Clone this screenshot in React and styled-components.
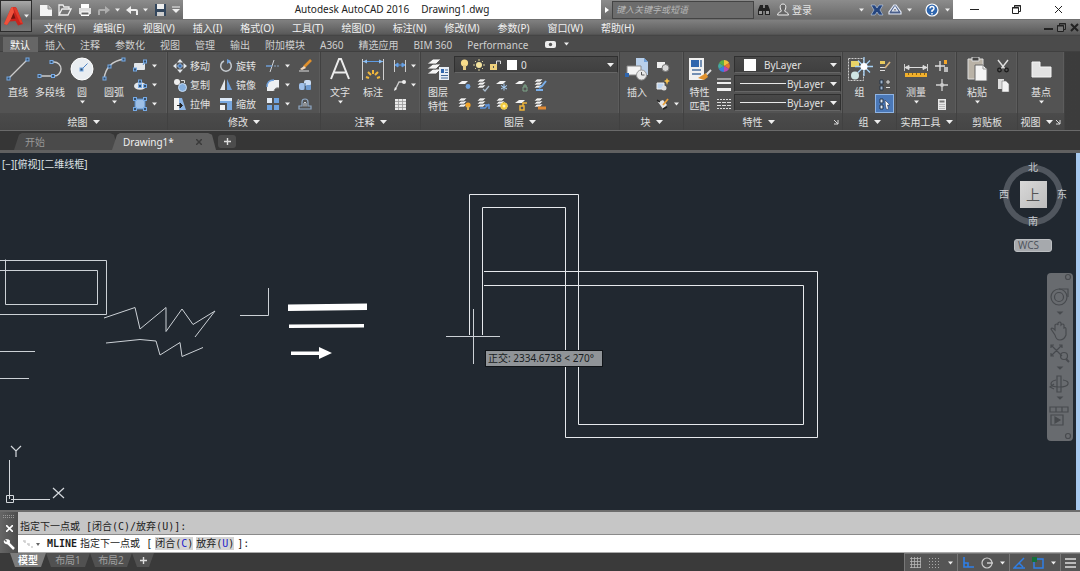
import React from 'react';
import styled, { createGlobalStyle, css } from 'styled-components';

const sans = '"Noto Sans", "Noto Sans CJK SC", sans-serif';
const mono = '"DejaVu Sans Mono", "Noto Sans CJK SC", monospace';

const Global = createGlobalStyle`
  * { box-sizing: border-box; }
  body { margin: 0; background: #3a3a3a; font: 10px/14px ${sans}; color: #e2e2e2; }
  button, input, select { font: inherit; color: inherit; border: 0; padding: 0; margin: 0; background: none; border-radius: 0; outline: 0; }
  svg { display: block; flex: none; }
  a { color: inherit; text-decoration: none; }
`;

/* ---------- frame ---------- */
const Window = styled.div`
  min-height: 100vh;
  display: flex;
  flex-direction: column;
  overflow: hidden;
`;
const Header = styled.header`
  display: flex;
  height: 36px;
  background: linear-gradient(#606060 0, #606060 19px, #808080 20px, #5a5a5a 34px, #3e3e3e 36px);
`;
const AppButton = styled.button`
  width: 32px;
  height: 32px;
  flex: none;
  display: flex;
  align-items: center;
  gap: 1px;
  padding-left: 2px;
  background: linear-gradient(#a8a8a8, #666 60%, #777);
  border: 1px solid #2c2c2c;
`;
const HeaderRows = styled.div`
  flex: 1;
  min-width: 0;
`;
const TitleBar = styled.div`
  display: flex;
  height: 19px;
  background: #fff;
`;
const grayStrip = css`
  background: linear-gradient(#8c8c8c, #686868);
  display: flex;
  align-items: center;
`;
const QuickAccess = styled.div`
  ${grayStrip}
  width: 151px;
  flex: none;
  padding-left: 5px;
`;
const IconButton = styled.button`
  width: ${(p) => p.$w || 18}px;
  height: ${(p) => p.$h || 18}px;
  flex: none;
  display: flex;
  align-items: center;
  justify-content: center;
  opacity: ${(p) => (p.$dim ? 0.45 : 1)};
`;
const Title = styled.h1`
  flex: 1;
  margin: 0;
  display: flex;
  gap: 12px;
  justify-content: center;
  font: 400 10px/19px ${sans};
  color: #222;
  white-space: nowrap;
`;
const InfoCenter = styled.div`
  ${grayStrip}
  width: 352px;
  flex: none;
`;
const SearchBox = styled.input`
  width: 142px;
  height: 18px;
  padding: 0 3px;
  background: #6c6c6c;
  border: 1px solid #444;
  font: italic 9px/16px ${sans};
  &::placeholder { color: #b8b8b8; opacity: 1; }
`;
const SignIn = styled.button`
  width: 62px;
  text-align: left;
`;
const WindowButtons = styled.div`
  width: 127px;
  flex: none;
  display: flex;
  justify-content: space-around;
  align-items: center;
`;
const MenuBar = styled.nav`
  display: flex;
  align-items: center;
  height: 17px;
  padding: 0 0 0 12px;
`;
const MenuItem = styled.button`
  margin-right: 18px;
  color: #f0f0f0;
  white-space: nowrap;
`;
const Spacer = styled.div`
  flex: 1;
`;

/* ---------- ribbon ---------- */
const TabRow = styled.div`
  display: flex;
  height: 16px;
  padding: 1px 0 0 3px;
  background: #4b4b4b;
  border-bottom: 1px solid #404040;
`;
const RibbonTab = styled.button`
  height: 15px;
  padding: 0 8px 0 7px;
  white-space: nowrap;
  color: ${(p) => (p.$active ? '#fff' : '#cfcfcf')};
  background: ${(p) => (p.$active ? '#666' : 'transparent')};
`;
const Ribbon = styled.div`
  display: flex;
  height: 79px;
  background: linear-gradient(90deg, #4a4a4a, #3c3c3c);
  border-bottom: 1px solid #6a6a6a;
`;
const Panel = styled.section`
  width: ${(p) => p.$w}px;
  flex: none;
  display: flex;
  flex-direction: column;
  background: #535353;
  border-right: 1px solid #414141;
  box-shadow: inset -1px 0 #5c5c5c;
`;
const PanelBody = styled.div`
  flex: 1;
  display: flex;
  padding: 4px 0 0 ${(p) => p.$pad || 2}px;
`;
const PanelTitle = styled.div`
  height: 17px;
  display: flex;
  align-items: center;
  justify-content: center;
  background: linear-gradient(#4b4b4b, #454545);
  padding-right: ${(p) => (p.$corner ? 3 : 0)}px;
`;
const PanelName = styled.button`
  flex: 1;
  display: flex;
  align-items: center;
  justify-content: center;
  gap: 5px;
  white-space: nowrap;
`;
const Big = styled.button`
  width: ${(p) => p.$w || 32}px;
  height: 57px;
  flex: none;
  display: flex;
  flex-direction: column;
  align-items: center;
  line-height: 14px;
  white-space: nowrap;
  padding-top: 1px;
  & > svg:first-child { margin-bottom: 4px; }
  & > svg ~ svg { margin-top: 1px; }
`;
const Column = styled.div`
  display: flex;
  flex-direction: column;
  width: ${(p) => p.$w}px;
  flex: none;
`;
const Small = styled.button`
  height: 19px;
  display: flex;
  align-items: center;
  gap: ${(p) => p.$gap || 5}px;
  padding-left: 3px;
  white-space: nowrap;
  background: ${(p) => (p.$on ? '#4a78b8' : 'none')};
  box-shadow: ${(p) => (p.$on ? 'inset 0 0 0 1px #8fb4e4' : 'none')};
`;
const Combo = styled.label`
  width: ${(p) => p.$w}px;
  height: 17px;
  margin-bottom: 2px;
  display: flex;
  align-items: center;
  gap: 4px;
  padding: 0 3px 0 5px;
  background: linear-gradient(#484848, #3f3f3f);
  border: 1px solid #303030;
  border-bottom-color: #666;
`;
const ComboSelect = styled.select`
  appearance: none;
  flex: 1;
  min-width: 0;
  height: 14px;
  padding-left: ${(p) => p.$pad || 0}px;
`;
const Swatch = styled.span`
  width: ${(p) => p.$s}px;
  height: ${(p) => p.$s}px;
  flex: none;
  background: #fff;
  margin-left: ${(p) => p.$ml || 0}px;
`;
const LineSample = styled.span`
  width: 46px;
  height: 1px;
  flex: none;
  background: #e8e8e8;
  margin-right: -3px;
`;
const IconRow = styled.div`
  display: flex;
  height: 19px;
`;

/* ---------- document tabs ---------- */
const DocTabs = styled.div`
  display: flex;
  height: 22px;
  padding: 2px 0 0 14px;
  background: #363636;
  border-bottom: 3px solid #606060;
`;
const DocTab = styled.button`
  width: 104px;
  height: 17px;
  margin-right: -6px;
  padding: 0 14px 0 11px;
  display: flex;
  align-items: center;
  justify-content: space-between;
  clip-path: polygon(0 100%, 5px 10%, 8px 0, calc(100% - 8px) 0, calc(100% - 4px) 10%, 100% 100%);
  color: ${(p) => (p.$active ? '#f0f0f0' : '#999')};
  background: ${(p) => (p.$active ? '#606060' : '#4a4a4a')};
`;
const AddTab = styled.button`
  width: 18px;
  height: 13px;
  margin: 2px 0 0 8px;
  display: flex;
  align-items: center;
  justify-content: center;
  background: #4c4c4c;
  border-radius: 3px;
`;

/* ---------- drawing area ---------- */
const DrawingArea = styled.main`
  position: relative;
  flex: 1;
  min-height: 300px;
  background: #212830;
  border-right: 4px solid #a9cbf0;
  overflow: hidden;
`;
const Sheet = styled.svg`
  position: absolute;
  left: 0;
  top: 0;
`;
const ViewLabel = styled.button`
  position: absolute;
  left: 2px;
  top: 4px;
  color: #dfe3e6;
`;
const Ucs = styled.svg`
  position: absolute;
  left: 0;
  bottom: 1px;
`;
const CursorTip = styled.output`
  position: absolute;
  left: 485px;
  top: 197px;
  width: 118px;
  height: 17px;
  padding-left: 2px;
  line-height: 15px;
  white-space: nowrap;
  color: #1a1e22;
  background: #909498;
  border: 1px solid #101418;
`;
const Compass = styled.div`
  position: absolute;
  right: 8px;
  top: 6px;
  width: 70px;
  height: 70px;
  display: grid;
  grid-template: 16px 1fr 16px / 12px 1fr 12px;
  place-items: center;
  color: #c8ccd0;
  &::before {
    content: '';
    position: absolute;
    inset: 6px 5px 4px 5px;
    border: 6px solid #50565e;
    border-radius: 50%;
  }
`;
const Direction = styled.button`
  position: relative;
  grid-area: ${(p) => p.$at};
  line-height: 12px;
`;
const CubeFace = styled.button`
  position: relative;
  grid-area: 2 / 2;
  width: 27px;
  height: 27px;
  font-size: 14px;
  line-height: 27px;
  color: #555;
  background: linear-gradient(135deg, #d8d8d8, #bcbcbc);
`;
const Wcs = styled.button`
  position: absolute;
  right: 24px;
  top: 86px;
  width: 38px;
  height: 13px;
  padding-left: 3px;
  text-align: left;
  line-height: 11px;
  color: #50565e;
  background: #a6a9ad;
  border: 1px solid #bcbfc2;
  border-radius: 3px;
`;
const NavBar = styled.div`
  position: absolute;
  right: 3px;
  top: 120px;
  width: 26px;
  height: 168px;
  background: #686b6f;
  border-radius: 4px;
`;

/* ---------- command line ---------- */
const Command = styled.section`
  display: flex;
  height: 43px;
  border-top: 2px solid #6c6c6c;
  color: #1c1c1c;
  font-family: ${mono};
`;
const Handle = styled.div`
  width: 18px;
  flex: none;
  display: flex;
  flex-direction: column;
  align-items: center;
  justify-content: space-between;
  padding: 2px 0;
  background: linear-gradient(90deg, #666, #4c4c4c);
`;
const CommandRows = styled.div`
  flex: 1;
  min-width: 0;
`;
const History = styled.div`
  height: 23px;
  padding: 8px 2px 0;
  background: #c6c6c6;
  border-bottom: 1px solid #8a8a8a;
`;
const Prompt = styled.div`
  height: 18px;
  display: flex;
  align-items: center;
  gap: 3px;
  padding-left: 4px;
  background: #fff;
  border-bottom: 1px solid #aaa;
  white-space: pre;
`;
const CommandName = styled.b`
  margin: 0 0 0 3px;
`;
const Option = styled.button`
  background: #d4d4d4;
  color: #222;
  height: 13px;
  line-height: 13px;
`;
const Key = styled.span`
  color: #2222cc;
`;
const Entry = styled.input`
  flex: 1;
  min-width: 0;
`;

/* ---------- status bar ---------- */
const Status = styled.footer`
  display: flex;
  height: 18px;
  padding-left: 10px;
  background: #3a3a3a;
`;
const LayoutTab = styled.button`
  width: ${(p) => p.$w}px;
  height: 14px;
  display: flex;
  align-items: center;
  justify-content: center;
  clip-path: polygon(0 0, 100% 0, calc(100% - 5px) 100%, 5px 100%);
  color: ${(p) => (p.$active ? '#fff' : '#a0a0a0')};
  font-weight: ${(p) => (p.$active ? 700 : 400)};
  background: ${(p) => (p.$active ? '#7c7c7c' : '#515151')};
`;
const StatusGroup = styled.div`
  display: flex;
  align-items: center;
  background: #555;
  border-left: 1px solid #777;
  border-top: 1px solid #777;
`;

/* ---------- icons ---------- */
const Ico = ({ w = 14, h = 14, children }) => (
  <svg width={w} height={h} viewBox={`0 0 ${w} ${h}`} fill="none" aria-hidden="true">{children}</svg>
);
const Down = ({ s = 7 }) => (
  <svg width={s} height="4" viewBox="0 0 7 4" aria-hidden="true"><path d="M0 0h7L3.500 4z" fill="#eee" /></svg>
);
const Tiny = () => <Down s={5} />;
const Corner = () => (
  <Ico w={6} h={6}><path d="M1 1l4 4M5 1v4H1" stroke="#ddd" /></Ico>
);
const Dot = ({ x, y }) => <rect x={x - 1.5} y={y - 1.5} width="3" height="3" fill="#33506f" stroke="#76aae6" />;

const LogoA = () => (
  <Ico w={20} h={22}>
    <path d="M1 19L8 3q.5-1 2-1h1.500q1.500 0 2 1L20 19l-5 1.500-2.500-4.500-6 .5L4 20z" fill="#c9241d" />
    <path d="M1 19L8 3l2-1 1 5-3 7-4 6z" fill="#f0523c" />
    <path d="M10 2l3.500 1L20 19l-3-1.500z" fill="#e03a2a" />
    <path d="M10.500 8l2 5.500-4.500.5z" fill="#74150f" />
  </Ico>
);
const NewFile = () => <Ico><path d="M1 2h8l4 4v7H1z" fill="#f4f4f4" /><path d="M9 2v4h4" fill="#bbb" stroke="#888" /></Ico>;
const OpenFile = () => <Ico><path d="M1 12V2h4l1 2h5v2M1 12l3-6h9l-3 6z" fill="#777" stroke="#eee" strokeWidth="1.300" /></Ico>;
const PrintIcon = () => <Ico><path d="M3 1h8v4H3zM3 9h8v4H3z" fill="#fff" /><path d="M1 5h12v6H1z" fill="#ddd" /><path d="M3 9h8v3H3z" fill="#666" stroke="#fff" /></Ico>;
const Undo = () => <Ico><path d="M12 12V8q0-1-1-1H5" stroke="#eee" strokeWidth="2" /><path d="M6 3v8L1 7z" fill="#eee" /></Ico>;
const Redo = () => <Ico><path d="M2 12V8q0-1 1-1h6" stroke="#eee" strokeWidth="2" /><path d="M8 3v8l5-4z" fill="#eee" /></Ico>;
const SaveIcon = () => <Ico><path d="M2 1h11v12H2z" fill="#33465c" /><path d="M4 1h7v5H4z" fill="#eee" /><path d="M4 9h7v4H4z" fill="#ccc" /></Ico>;
const MenuDown = () => <Ico w={8} h={7}><path d="M0 1h8" stroke="#eee" /><path d="M0 3h8L4 7z" fill="#eee" /></Ico>;
const Binoculars = () => <Ico><path d="M3 2h3v10H1V7zM11 2H8v10h5V7z" fill="#222" /><path d="M6 5h2v3H6z" fill="#222" /><path d="M2 8h3v3H2zM9 8h3v3H9z" fill="#999" /></Ico>;
const UserIcon = () => <Ico><path d="M7 1c4 0 3 5 1.500 7 0 1 4 1 4 4h-11c0-3 4-3 4-4C4 6 3 1 7 1z" fill="#666" stroke="#eee" /></Ico>;
const ExchangeX = () => <Ico><path d="M1 2h4l2 3 2-3h4l-3 5 3 5H9L7 9l-2 3H1l3-5z" fill="#25457e" stroke="#c0d0ea" strokeWidth=".6" /></Ico>;
const A360Icon = () => <Ico><path d="M6 2h2l5 7v2H1V9zM4.500 8h5L7 4z" stroke="#e4e9f4" strokeWidth="1.200" fill="#4b5f8a" /></Ico>;
const Help = () => (
  <Ico><circle cx="7" cy="7" r="6" fill="#2f66ae" stroke="#fff" strokeWidth="1.200" /><path d="M5 5.500Q5 3.500 7 3.500t2 2Q9 7 7 7.500V9M7 10v1.500" stroke="#fff" strokeWidth="1.400" /></Ico>
);
const Min = ({ s = 1 }) => <Ico w={9} h={9}><path d={s > 1 ? 'M0 6h9' : 'M0 4.500h9'} stroke="#222" strokeWidth={s} /></Ico>;
const Restore = ({ f = '#fff' }) => <Ico w={9} h={9}><path d="M2.500 2.500v-2h6v6h-2" stroke="#222" /><path d="M.5 2.500h6v6h-6z" stroke="#222" fill={f} /><path d="M2 1h7M0 3h7" stroke="#222" /></Ico>;
const Close = ({ s = 1 }) => <Ico w={9} h={9}><path d="M1 1l7 7M8 1L1 8" stroke="#222" strokeWidth={s} /></Ico>;
const Record = () => <Ico w={11} h={7}><rect y="0" width="11" height="7" rx="2" fill="#eee" /><circle cx="5.500" cy="3.500" r="1.700" fill="#555" /></Ico>;

const LineIcon = () => <Ico w={24} h={24}><path d="M2 22L22 2" stroke="#ccc" strokeWidth="1.200" /><Dot x={2.5} y={21.5} /><Dot x={21.5} y={2.5} /></Ico>;
const PolyIcon = () => <Ico w={26} h={24}><path d="M2 19h15a7 7 0 000-14h-2" stroke="#ccc" strokeWidth="1.400" /><Dot x={2.5} y={19} /><Dot x={16} y={19} /><Dot x={14.5} y={5} /></Ico>;
const CircleIcon = () => <Ico w={24} h={24}><circle cx="12" cy="12" r="11" fill="#e9edf1" stroke="#fff" /><path d="M11.500 12.500l6-6" stroke="#4c82c4" /><Dot x={11.5} y={12.5} /></Ico>;
const ArcIcon = () => <Ico w={24} h={24}><path d="M2 22Q4 5 22 2" stroke="#ccc" strokeWidth="1.400" /><Dot x={2.5} y={21.5} /><Dot x={7.5} y={9.5} /><Dot x={21.5} y={2.5} /></Ico>;
const RectIcon = () => <Ico><rect x="1" y="4" width="11" height="7" rx="1" fill="#e2e6ea" /><path d="M10 6l2-3" stroke="#5a90d0" /><Dot x={2} y={10.5} /><Dot x={12} y={2.5} /></Ico>;
const EllipseIcon = () => <Ico><ellipse cx="7" cy="8" rx="6" ry="3.800" fill="#e2e6ea" /><Dot x={7} y={8} /><Dot x={7} y={3.5} /><Dot x={12} y={8} /></Ico>;
const HatchIcon = () => <Ico><path d="M2 2h10v10H2z" fill="#9dbfe6" stroke="#5288c6" /><Dot x={2} y={2} /><Dot x={12} y={2} /><Dot x={2} y={12} /><Dot x={12} y={12} /></Ico>;
const MoveIcon = () => <Ico><path d="M7 0l3 3.500H4zM7 14l3-3.500H4zM0 7l3.500-3v6zM14 7l-3.500-3v6z" fill="#e2e6ea" /><path d="M7 4.500L9.500 7 7 9.500 4.500 7z" fill="#3a6cac" stroke="#9cc2ee" /></Ico>;
const CopyIcon = () => <Ico><circle cx="4" cy="4" r="3" fill="#eee" /><circle cx="9.500" cy="9.500" r="4" fill="#86b0e0" stroke="#c8def6" /><path d="M8 2.500h3.500V5" stroke="#ddd" /></Ico>;
const StretchIcon = () => <Ico><path d="M1 1h5v12H1z" fill="#f4f4f4" /><path d="M6 1h3l4 12H6z" fill="#8db5e4" /><path d="M4 8.500h4M7 6l2.500 2.500L7 11z" stroke="#222" fill="#222" /></Ico>;
const RotateIcon = () => <Ico><path d="M9 2a5.300 5.300 0 11-4 0" stroke="#c6cbd0" strokeWidth="1.500" /><path d="M8 0v5l4-3z" fill="#6f9fd8" /></Ico>;
const MirrorIcon = () => <Ico><path d="M6 1v11H1z" fill="#e4e8ec" /><path d="M8 1v11h5z" fill="#6c9fdc" /></Ico>;
const ScaleIcon = () => <Ico><path d="M1 1h12v12H8V6H1z" fill="#79a8df" /><path d="M1 1h12v3H1z" fill="#dce8f6" /><path d="M1 8h5v5H1z" fill="#f2f2f2" /></Ico>;
const TrimIcon = () => <Ico><path d="M8 1L4 13" stroke="#cfd3d8" /><path d="M0 7h6" stroke="#70a2dd" strokeWidth="1.400" /><path d="M8 7h5" stroke="#8aa4c2" strokeDasharray="2 1" /></Ico>;
const FilletIcon = () => <Ico><path d="M1 13V9q0-7 7-7h5v8q-4-1-5 3z" fill="#eceff2" /><path d="M1 9q0-7 7-7" stroke="#70a2dd" strokeWidth="1.400" /><path d="M8 13q1-4 5-3" stroke="#888" /></Ico>;
const ArrayIcon = () => <Ico><path d="M1 1h5v5H1z" fill="#e4ebf4" /><path d="M8 1h5v5H8zM1 8h5v5H1zM8 8h5v5H8z" fill="#6fa3e0" /></Ico>;
const EraseIcon = () => <Ico><path d="M13 1L6 8" stroke="#e0902c" strokeWidth="2.600" /><path d="M6 7l2 2-4 2-2-1z" fill="#f2d9c0" /><path d="M1 12h10" stroke="#ddd" /></Ico>;
const ExplodeIcon = () => <Ico><rect x="1" y="5" width="6" height="7" rx="2" fill="#9fc0ea" /><rect x="6" y="2" width="7" height="6" rx="2" fill="#c9dcf4" /><rect x="8" y="7" width="5" height="5" rx="1" fill="#6f9bd0" /><path d="M7 5v7" stroke="#47698f" /></Ico>;
const OffsetIcon = () => <Ico><path d="M4 9V5q0-3 3-3t3 3v4h3v3H1V9z" stroke="#8fa9c6" strokeWidth="1.200" /><path d="M6 9.500V6q1-2 2 0v3.500" stroke="#c8ced4" /></Ico>;
const TextIcon = () => <Ico w={24} h={24}><path d="M3 22L11 2h2l8 20M6 15.500h12" stroke="#ececec" strokeWidth="2" /></Ico>;
const DimIcon = () => <Ico w={24} h={24}><path d="M1.500 2v21M22.500 2v21" stroke="#d0d0d0" /><path d="M2 4.500h20" stroke="#5d9be4" /><path d="M2 4.500l4-2v4zM22 4.500l-4-2v4z" fill="#8fc0f4" /><path d="M5 20l3 1M7 15l3 3M12 13v4M17 15l-3 3M19 20l-3 1" stroke="#f0b73c" strokeWidth="2" /></Ico>;
const LinearIcon = () => <Ico><path d="M1.500 1v12M12.500 1v12" stroke="#ccc" /><path d="M2 6h10M2 6l3-2v4zM12 6L9 4v4z" stroke="#64a0e6" fill="#64a0e6" /></Ico>;
const LeaderIcon = () => <Ico><path d="M2 12L6 4h4" stroke="#ccc" strokeWidth="1.400" /><circle cx="11" cy="4" r="2" fill="#eee" /><path d="M1 13l1-4 2 2z" fill="#eee" /></Ico>;
const TableIcon = () => <Ico><path d="M2 2h11v11H2z" fill="#eaeaea" /><path d="M2 4.500h11M2 7.500h11M2 10.500h11M5.500 2v11M9.500 2v11" stroke="#999" strokeWidth=".8" /></Ico>;
const Sheets = ({ c = '#f2f2f2' }) => <g stroke="#4b4b4b" strokeWidth=".6" fill={c}><path d="M1 10l3-3h6l-3 3z" /><path d="M1 7l3-3h6L7 7z" /><path d="M1 4l3-3h6L7 4z" /></g>;
const LayerPropIcon = () => (
  <Ico w={24} h={24}><g fill="#f4f4f4" stroke="#4c4c4c" strokeWidth=".8"><path d="M1 17l6-5h8l-5 5z" /><path d="M1 12l6-5h8l-5 5z" /><path d="M1 7l6-5h8l-5 5z" /></g><path d="M13 10h10v13H13z" fill="#e8eef5" /><path d="M15 12h3v4h-3z" fill="#2f66ae" /><path d="M19 13h3M19 15.500h3M15 18.500h7M15 21h7" stroke="#456a98" /></Ico>
);
const Bulb = () => <Ico w={9} h={12}><circle cx="4.500" cy="4" r="3.600" fill="#f8dc8a" /><path d="M3 6h3v5H3z" fill="#e6cb84" /></Ico>;
const Sun = () => <Ico w={12} h={12}><circle cx="6" cy="6" r="3" fill="#f5e4a0" /><path d="M6 0v2M6 10v2M0 6h2M10 6h2M2 2l1 1M9 9l1 1M10 2L9 3M3 9l-1 1" stroke="#d8cf9a" /></Ico>;
const Lock = () => <Ico w={12} h={12}><path d="M1 5h7v6H1z" fill="#f1d27c" /><path d="M4 7h1v2H4z" fill="#555" /><path d="M7.500 5V2h4v3" stroke="#ddd" /></Ico>;
const LayerOp = ({ mark, single }) => (
  <Ico>{single ? <path d="M1 6l4-3h6L8 6z" fill="#f2f2f2" /> : <Sheets />}{mark}</Ico>
);
const layerOps = [
  [
    ['关闭', <LayerOp single mark={<circle cx="11" cy="8.500" r="2.400" fill="#6fa3e0" />} />],
    ['隔离', <LayerOp mark={<path d="M7 11l2 2 4-5" stroke="#a9bccf" strokeWidth="1.300" />} />],
    ['冻结', <LayerOp single mark={<path d="M9 5.500v7M6 7.500l6 3.500M12 7.500L6 11" stroke="#a9d0f8" />} />],
    ['锁定', <LayerOp single mark={<path d="M9 9h4v4H9zM10 9V7h2v2" stroke="#7fa68a" />} />],
    ['置为当前', <LayerOp mark={<path d="M6 10l3-2 4-5M3 12h7" stroke="#79aeea" strokeWidth="2" />} />],
  ],
  [
    ['打开所有', <LayerOp mark={<><circle cx="11" cy="8" r="2.600" fill="#f4a62a" /><path d="M11 9v4" stroke="#d9b45a" strokeWidth="2" /></>} />],
    ['取消隔离', <LayerOp mark={<path d="M4 11h5l4-4M9 8h4v4" stroke="#5d94de" strokeWidth="1.500" />} />],
    ['解冻', <LayerOp mark={<><circle cx="9" cy="9" r="3.500" fill="#f2c93a" stroke="#f8e070" strokeDasharray="1 1" /><circle cx="9" cy="9" r="1.500" fill="#fff2b4" /></>} />],
    ['解锁', <LayerOp single mark={<path d="M6 9h4v4H6zM9 9V6h4" stroke="#eeb43a" strokeWidth="1.500" />} />],
    ['匹配图层', <LayerOp mark={<path d="M5 11h8" stroke="#e08a34" strokeWidth="3" />} />],
  ],
];
const InsertIcon = () => (
  <Ico w={24} h={24}><path d="M11 1h8l4 4v13H11z" fill="#b8cfea" /><path d="M19 1v4h4" fill="#6f9fd8" /><path d="M2 9h14v9H2z" fill="#f4f4f4" stroke="#888" /><circle cx="16.500" cy="18" r="5" fill="#e8e8e8" stroke="#999" /><path d="M16.500 18v-3M16.500 18h3" stroke="#555" /><path d="M0 16h4v4H0z" fill="#2f66ae" /></Ico>
);
const CreateBlock = () => <Ico><path d="M1 3h8v6H1z" fill="#eee" /><circle cx="9.500" cy="9" r="3.500" fill="#d6d6d6" stroke="#777" /></Ico>;
const EditBlock = () => <Ico><path d="M1 5h7v6H1z" fill="#bcd3ee" stroke="#eee" /><circle cx="8" cy="10" r="2.500" fill="#ddd" /><path d="M11 0l1 2 2 1-2 1-1 3-1-3-2-1 2-1z" fill="#f7c04a" /></Ico>;
const AttrIcon = () => <Ico><path d="M2 5l5 7 4-4-4-5z" fill="#e6e6e6" /><path d="M1 3l3 2M7 12l4-2" stroke="#222" strokeWidth="1.400" /><path d="M7 8l5-6" stroke="#e9a03a" strokeWidth="1.800" /></Ico>;
const MatchIcon = () => (
  <Ico w={24} h={24}><path d="M1 1h15v22H1z" fill="#f0f0f0" /><path d="M3 3h8v7H3z" fill="#2f66ae" /><path d="M13 3v7M4 13h9M4 17h9" stroke="#4a6f9e" strokeWidth="1.500" /><path d="M23 13l-6 6" stroke="#ddd" strokeWidth="2" /><path d="M18 16l2 4-4 3-6-2z" fill="#e0922e" /></Ico>
);
const Wheel = () => <Ico><path d="M7 7V1a6 6 0 015.200 3z" fill="#f0c23c" /><path d="M7 7l5.200-3A6 6 0 0112 10z" fill="#e8742e" /><path d="M7 7l5 3a6 6 0 01-5 3z" fill="#b94bb0" /><path d="M7 7v6a6 6 0 01-5.200-3z" fill="#3a7de0" /><path d="M7 7l-5.200 3A6 6 0 012 4z" fill="#45a8a0" /><path d="M7 7L2 4a6 6 0 015-3z" fill="#5cae44" /></Ico>;
const Weights = () => <Ico><path d="M0 1h14" stroke="#eee" /><path d="M0 5h14" stroke="#eee" strokeWidth="2" /><path d="M0 11.500h14" stroke="#eee" strokeWidth="3" /></Ico>;
const Dashes = () => <Ico><path d="M0 2.500h14M0 11.500h14" stroke="#ddd" strokeDasharray="2 1" /><path d="M0 5.500h14M0 8.500h14" stroke="#ddd" strokeDasharray="4 1" /></Ico>;
const GroupIcon = () => (
  <Ico w={26} h={24}><path d="M1.500 1.500h15v22h-15z" stroke="#ccc" strokeDasharray="2 1" /><path d="M4 4h8v6H4z" fill="#e8d466" /><circle cx="8" cy="18.500" r="4" fill="#cfe6e4" /><path d="M17 0v19M8 9.500h18M11 3.500l12 12M23 3.500l-12 12" stroke="#a6d2f6" strokeWidth="1.300" /><circle cx="17" cy="9.500" r="3.500" fill="#fff" /></Ico>
);
const UngroupIcon = () => <Ico><path d="M2 2h5v3H2z" fill="#e8c95c" /><path d="M2 8.500h5M2 11.500h5" stroke="#ddd" /><path d="M12 3L7 9" stroke="#d8b27c" strokeWidth="1.600" /></Ico>;
const GroupEdit = () => <Ico><path d="M2 2h3v4H2zM2 8h3v4H2z" fill="#9fb4cc" stroke="#263546" /><path d="M8 4h4M10 2v4M8 9.500h4" stroke="#ddd" /></Ico>;
const GroupPick = () => <Ico><path d="M2 2h3v4H2zM2 8h3v4H2z" fill="#dfe9f6" stroke="#263546" /><path d="M7 3l5 5H9.500l1 4-2 .5-1-3.500z" fill="#fff" stroke="#223" strokeWidth=".5" /></Ico>;
const MeasureIcon = () => <Ico w={24} h={24}><path d="M.5 7v7M23.500 7v7" stroke="#ccc" /><path d="M1 10.500h22M1 10.500l4-2v4zM23 10.500l-4-2v4z" stroke="#ddd" fill="#ddd" /><path d="M1 16h22v4H1z" fill="#f1b02c" /><path d="M4.500 16v2M8.500 16v2M12.500 16v2M16.500 16v2M20.500 16v2" stroke="#8d6412" /></Ico>;
const QuickSel = () => <Ico><path d="M5 2v10M0 7h10" stroke="#ddd" strokeWidth="1.400" /><path d="M9 1h3v4H9z" fill="#f4a62a" /><path d="M9 8h4v5H9z" fill="#bbb" /></Ico>;
const PointIcon = () => <Ico><path d="M7 1v12M1 7h12" stroke="#d4d4d4" strokeWidth="1.300" /><circle cx="7" cy="7" r="2" fill="#ccc" /></Ico>;
const CalcIcon = () => <Ico><path d="M3 2h8v11H3z" fill="#e8e8e8" /><path d="M4.500 3.500h5v2h-5z" fill="#777" /><path d="M4.500 7.500h5M4.500 9.500h5M4.500 11.500h5" stroke="#888" strokeDasharray="1 1" /></Ico>;
const PasteIcon = () => <Ico w={24} h={24}><path d="M3 2h15v20H3z" fill="#b9b2a6" stroke="#ddd" /><path d="M7 0h7v4H7z" fill="#444" stroke="#ddd" /><path d="M10 8h8l4 4v12H10z" fill="#f4f4f4" stroke="#666" /><path d="M18 8v4h4" stroke="#999" /></Ico>;
const CutIcon = () => <Ico><path d="M2 1l7 9M12 1L5 10" stroke="#e0e0e0" strokeWidth="1.400" /><circle cx="3.500" cy="11" r="1.800" stroke="#1c1c1c" strokeWidth="1.300" /><circle cx="10.500" cy="11" r="1.800" stroke="#1c1c1c" strokeWidth="1.300" /></Ico>;
const CopyClip = () => <Ico><path d="M2 1h6v10H2z" fill="#ddd" /><path d="M6 3h4l3 3v8H6z" fill="#f4f4f4" stroke="#777" strokeWidth=".6" /></Ico>;
const BaseIcon = () => <Ico w={24} h={24}><path d="M3 5h8v5h11v10H3z" fill="#e2e2e2" stroke="#f4f4f4" /></Ico>;
const PlusIcon = () => <Ico w={7} h={7}><path d="M3.500 0v7M0 3.500h7" stroke="#ddd" strokeWidth="1.400" /></Ico>;

const NavIcons = () => (
  <svg width="26" height="168" viewBox="0 0 26 168" fill="none" stroke="#474a4e" strokeWidth="1.200" role="img" aria-label="导航工具">
    <circle cx="21" cy="4" r="2.500" />
    <circle cx="12" cy="24" r="8" /><circle cx="12" cy="24" r="4.500" /><path d="M12 16h9v8" />
    <path d="M11 39h4l-2 2z" fill="#474a4e" />
    <path d="M8 62l-4-6q1-2 4 1v-5q2-2 3 0v-2q2-2 3 0v2q2-2 3 0v3q2-1 2 1v6q-2 5-6 5-4 0-5-5" />
    <path d="M4 72l11 11M15 72L4 83M4 75v-3h3M12 72h3v3M4 80v3h3" /><circle cx="17" cy="83" r="3.500" /><path d="M19 86l3 3" strokeWidth="2" />
    <path d="M11 94h4l-2 2z" fill="#474a4e" />
    <path d="M10 103h4v16h-4z" /><path d="M9 107q-5 1-5 4t8 3 9-3-5-4" /><path d="M7 111l-4 3 4 2" />
    <path d="M11 124h4l-2 2z" fill="#474a4e" />
    <path d="M3 134h18v5H3zM9 134v5M15 134v5M4 142h12v10H4z" /><path d="M8 144v6l5-3z" fill="#474a4e" />
    <circle cx="21" cy="163" r="2.500" />
  </svg>
);

/* ---------- content ---------- */
const menus = ['文件(F)', '编辑(E)', '视图(V)', '插入(I)', '格式(O)', '工具(T)', '绘图(D)', '标注(N)', '修改(M)', '参数(P)', '窗口(W)', '帮助(H)'];
const ribbonTabs = ['默认', '插入', '注释', '参数化', '视图', '管理', '输出', '附加模块', 'A360', '精选应用', 'BIM 360', 'Performance'];

const RibbonPanel = ({ name, w, pad, corner, plain, children }) => (
  <Panel $w={w} aria-label={name}>
    <PanelBody $pad={pad}>{children}</PanelBody>
    <PanelTitle $corner={corner}>
      <PanelName>{name}{!plain && <Down />}</PanelName>
      {corner && <Corner />}
    </PanelTitle>
  </Panel>
);

const Drawing = () => (
  <Sheet width="1076" height="357" viewBox="0 153 1076 357" fill="none" stroke="#ccd1d6" role="img" aria-label="图形">
    <path d="M0 260.500h106.500v54H0M0 270.500h97.500v34H5.500v-45M0 351.500h35M0 378.500h29" />
    <path d="M104 318l31-10.500 5 21.500 26-21.500v24l16-22.500 11 15.500 22-13.500-20 26M106 343l34-3.500 16 1.500 4 14 20-12.500 2 14 21-9" />
    <path d="M268.500 288v27.500h-28.500" />
    <path d="M288 304.500l79-1v6.500l-79 1zM289 324.500l75-.5v3.500l-75 .5zM291 351.500h28v-4.500l13 6-13 6v-4h-28z" fill="#fff" stroke="none" />
    <path d="M469.500 335V194.500h109v230h225v-139H484M482.500 335V207.500h83v230h252v-166H484" stroke="#e6e9ec" />
    <path d="M446 336.500h54M473.500 309v55" />
  </Sheet>
);

export default function App() {
  return (
    <Window>
      <Global />
      <Header>
        <AppButton aria-label="应用程序菜单"><LogoA /><Tiny /></AppButton>
        <HeaderRows>
          <TitleBar>
            <QuickAccess>
              <IconButton aria-label="新建"><NewFile /></IconButton>
              <IconButton aria-label="打开" $w={20}><OpenFile /></IconButton>
              <IconButton aria-label="打印" $w={19}><PrintIcon /></IconButton>
              <IconButton aria-label="重做" $w={19} $dim><Redo /></IconButton>
              <IconButton aria-label="重做列表" $w={9}><Tiny /></IconButton>
              <IconButton aria-label="放弃" $w={19}><Undo /></IconButton>
              <IconButton aria-label="放弃列表" $w={9}><Tiny /></IconButton>
              <IconButton aria-label="保存" $w={20}><SaveIcon /></IconButton>
              <IconButton aria-label="自定义" $w={12}><MenuDown /></IconButton>
            </QuickAccess>
            <Title><span>Autodesk AutoCAD 2016</span><span>Drawing1.dwg</span></Title>
            <InfoCenter>
              <IconButton $w={11} aria-label="展开搜索"><Ico w={4} h={6}><path d="M0 0v6l4-3z" fill="#fff" /></Ico></IconButton>
              <SearchBox aria-label="搜索" placeholder="键入关键字或短语" />
              <IconButton $w={20} aria-label="查找"><Binoculars /></IconButton>
              <IconButton aria-label="用户"><UserIcon /></IconButton>
              <SignIn>登录</SignIn>
              <IconButton $w={14} aria-label="登录列表"><Tiny /></IconButton>
              <IconButton aria-label="Exchange"><ExchangeX /></IconButton>
              <IconButton aria-label="A360"><A360Icon /></IconButton>
              <IconButton $w={10} aria-label="A360 列表"><Tiny /></IconButton>
              <Spacer />
              <IconButton aria-label="帮助"><Help /></IconButton>
              <IconButton $w={12} aria-label="帮助列表"><Tiny /></IconButton>
            </InfoCenter>
            <WindowButtons>
              <IconButton aria-label="最小化"><Min /></IconButton>
              <IconButton aria-label="还原"><Restore /></IconButton>
              <IconButton aria-label="关闭"><Close /></IconButton>
            </WindowButtons>
          </TitleBar>
          <MenuBar>
            {menus.map((m) => <MenuItem key={m}>{m}</MenuItem>)}
            <Spacer />
            <IconButton $w={13} $h={14} aria-label="最小化图形"><Min s={2} /></IconButton>
            <IconButton $w={13} $h={14} aria-label="还原图形"><Restore f="#777" /></IconButton>
            <IconButton $w={12} $h={14} aria-label="关闭图形"><Close s={2} /></IconButton>
          </MenuBar>
        </HeaderRows>
      </Header>

      <TabRow>
        {ribbonTabs.map((t, i) => <RibbonTab key={t} $active={i === 0}>{t}</RibbonTab>)}
        <IconButton $w={28} $h={14} aria-label="录制"><Record /></IconButton>
        <IconButton $w={4} $h={14} aria-label="录制列表"><Tiny /></IconButton>
      </TabRow>

      <Ribbon>
        <RibbonPanel name="绘图" w={168}>
          <Big><LineIcon />直线</Big>
          <Big><PolyIcon />多段线</Big>
          <Big><CircleIcon />圆<Tiny /></Big>
          <Big><ArcIcon />圆弧<Tiny /></Big>
          <Column $w={32}>
            <Small aria-label="矩形"><RectIcon /><Tiny /></Small>
            <Small aria-label="椭圆"><EllipseIcon /><Tiny /></Small>
            <Small aria-label="图案填充"><HatchIcon /><Tiny /></Small>
          </Column>
        </RibbonPanel>
        <RibbonPanel name="修改" w={153}>
          <Column $w={46}>
            <Small $gap={3}><MoveIcon />移动</Small>
            <Small $gap={3}><CopyIcon />复制</Small>
            <Small $gap={3}><StretchIcon />拉伸</Small>
          </Column>
          <Column $w={47}>
            <Small $gap={3}><RotateIcon />旋转</Small>
            <Small $gap={3}><MirrorIcon />镜像</Small>
            <Small $gap={3}><ScaleIcon />缩放</Small>
          </Column>
          <Column $w={32}>
            <Small aria-label="修剪"><TrimIcon /><Tiny /></Small>
            <Small aria-label="圆角"><FilletIcon /><Tiny /></Small>
            <Small aria-label="阵列"><ArrayIcon /><Tiny /></Small>
          </Column>
          <Column $w={22}>
            <Small aria-label="删除"><EraseIcon /></Small>
            <Small aria-label="分解"><ExplodeIcon /></Small>
            <Small aria-label="偏移"><OffsetIcon /></Small>
          </Column>
        </RibbonPanel>
        <RibbonPanel name="注释" w={100} pad={3}>
          <Big><TextIcon />文字<Tiny /></Big>
          <Big $w={34}><DimIcon />标注</Big>
          <Column $w={30}>
            <Small $gap={4} aria-label="线性"><LinearIcon /><Tiny /></Small>
            <Small $gap={4} aria-label="引线"><LeaderIcon /><Tiny /></Small>
            <Small aria-label="表格"><TableIcon /></Small>
          </Column>
        </RibbonPanel>
        <RibbonPanel name="图层" w={199} pad={1}>
          <Big><LayerPropIcon />图层<br />特性</Big>
          <Column $w={164}>
            <Combo $w={164}>
              <Bulb /><Sun /><Lock /><Swatch $s={10} $ml={2} />
              <ComboSelect aria-label="当前图层"><option>0</option></ComboSelect>
              <Down />
            </Combo>
            {layerOps.map((row, i) => (
              <IconRow key={i}>
                {row.map(([n, icon]) => <IconButton key={n} $w={19} $h={19} aria-label={n}>{icon}</IconButton>)}
              </IconRow>
            ))}
          </Column>
        </RibbonPanel>
        <RibbonPanel name="块" w={64} pad={1}>
          <Big><InsertIcon />插入</Big>
          <Column $w={29}>
            <Small aria-label="创建块"><CreateBlock /></Small>
            <Small aria-label="编辑块"><EditBlock /></Small>
            <Small $gap={4} aria-label="编辑属性"><AttrIcon /><Tiny /></Small>
          </Column>
        </RibbonPanel>
        <RibbonPanel name="特性" w={159} pad={1} corner>
          <Big $w={29}><MatchIcon />特性<br />匹配</Big>
          <Column $w={20}>
            <Small aria-label="颜色"><Wheel /></Small>
            <Small aria-label="线宽"><Weights /></Small>
            <Small aria-label="线型"><Dashes /></Small>
          </Column>
          <Column $w={108}>
            <Combo $w={107}>
              <Swatch $s={12} $ml={4} />
              <ComboSelect $pad={4} aria-label="对象颜色"><option>ByLayer</option></ComboSelect>
              <Down />
            </Combo>
            <Combo $w={107}>
              <LineSample />
              <ComboSelect aria-label="对象线宽"><option>ByLayer</option></ComboSelect>
              <Down />
            </Combo>
            <Combo $w={107}>
              <LineSample />
              <ComboSelect aria-label="对象线型"><option>ByLayer</option></ComboSelect>
              <Down />
            </Combo>
          </Column>
        </RibbonPanel>
        <RibbonPanel name="组" w={54} pad={1}>
          <Big $w={31}><GroupIcon />组</Big>
          <Column $w={19}>
            <Small aria-label="解除编组"><UngroupIcon /></Small>
            <Small aria-label="组编辑"><GroupEdit /></Small>
            <Small $on aria-label="启用组选择"><GroupPick /></Small>
          </Column>
        </RibbonPanel>
        <RibbonPanel name="实用工具" w={60} pad={3}>
          <Big><MeasureIcon />测量<Tiny /></Big>
          <Column $w={20}>
            <Small aria-label="快速选择"><QuickSel /></Small>
            <Small aria-label="点坐标"><PointIcon /></Small>
            <Small aria-label="计算器"><CalcIcon /></Small>
          </Column>
        </RibbonPanel>
        <RibbonPanel name="剪贴板" w={61} pad={4} plain>
          <Big><PasteIcon />粘贴<Tiny /></Big>
          <Column $w={20}>
            <Small aria-label="剪切"><CutIcon /></Small>
            <Small aria-label="复制"><CopyClip /></Small>
          </Column>
        </RibbonPanel>
        <RibbonPanel name="视图" w={47} pad={7} corner>
          <Big><BaseIcon />基点<Tiny /></Big>
        </RibbonPanel>
      </Ribbon>

      <DocTabs>
        <DocTab>开始</DocTab>
        <DocTab $active>Drawing1*<Ico w={6} h={6}><path d="M0 0l6 6M6 0L0 6" stroke="#3a3a3a" strokeWidth="1.500" /></Ico></DocTab>
        <AddTab aria-label="新图形"><PlusIcon /></AddTab>
      </DocTabs>

      <DrawingArea>
        <Drawing />
        <ViewLabel>[−][俯视][二维线框]</ViewLabel>
        <CursorTip>正交: 2334.6738 &lt; 270°</CursorTip>
        <Ucs width="70" height="66" viewBox="0 0 70 66" fill="none" stroke="#d4d8dc">
          <path d="M9.500 56V17M11 56.500h39M6.500 52.500h7v7h-7z" />
          <path d="M11 3l5 5 5-5M16 8v6M53 45l11 10M64 45L53 55" strokeWidth="1.200" />
        </Ucs>
        <Compass>
          <Direction $at="1 / 2">北</Direction>
          <Direction $at="2 / 1">西</Direction>
          <CubeFace>上</CubeFace>
          <Direction $at="2 / 3">东</Direction>
          <Direction $at="3 / 2">南</Direction>
        </Compass>
        <Wcs>WCS</Wcs>
        <NavBar><NavIcons /></NavBar>
      </DrawingArea>

      <Command>
        <Handle>
          <Ico w={14} h={5}><path d="M1 1.500h12M1 3.500h12" stroke="#999" strokeDasharray="1 1" /></Ico>
          <IconButton $w={14} $h={12} aria-label="关闭命令行"><Ico w={7} h={7}><path d="M0 0l7 7M7 0L0 7" stroke="#fff" strokeWidth="1.600" /></Ico></IconButton>
          <IconButton $w={14} $h={14} aria-label="自定义命令行"><Ico w={12} h={12}><path d="M4 4l7 7" stroke="#fff" strokeWidth="2.500" /><path d="M2 1l2 2-1 1-2-2Q0 5 3 6q4 1 4-3 0-2-5-2z" fill="#fff" /></Ico></IconButton>
        </Handle>
        <CommandRows>
          <History>指定下一点或 [闭合(C)/放弃(U)]:</History>
          <Prompt>
            <Ico w={19} h={10}><path d="M1 2h2v2M5 5h2v2M9 8h2" stroke="#ccc" strokeWidth="1.500" /><path d="M14 4h4l-2 3z" fill="#666" /></Ico>
            <CommandName>MLINE</CommandName>
            <span>指定下一点或 [</span>
            <Option>闭合(<Key>C</Key>)</Option>
            <Option>放弃(<Key>U</Key>)</Option>
            <span>]:</span>
            <Entry aria-label="命令" />
          </Prompt>
        </CommandRows>
      </Command>

      <Status>
        <LayoutTab $w={36} $active>模型</LayoutTab>
        <LayoutTab $w={44}>布局1</LayoutTab>
        <LayoutTab $w={42}>布局2</LayoutTab>
        <LayoutTab $w={22} aria-label="新建布局"><PlusIcon /></LayoutTab>
        <Spacer />
        <StatusGroup>
          <IconButton $w={20} aria-label="栅格"><Ico w={11} h={11}><path d="M1.500 0v11M4.500 0v11M7.500 0v11M10.500 0v11M0 1.500h11M0 4.500h11M0 7.500h11M0 10.500h11" stroke="#b4b4b4" strokeWidth=".8" /></Ico></IconButton>
          <IconButton $w={18} aria-label="捕捉"><Ico w={11} h={11}><path d="M0 1.500h11M0 4.500h11M0 7.500h11M0 10.500h11" stroke="#a8a8a8" strokeDasharray="1 2" /></Ico></IconButton>
          <IconButton $w={14} aria-label="捕捉列表"><Tiny /></IconButton>
        </StatusGroup>
        <StatusGroup>
          <IconButton $w={19} aria-label="正交"><Ico w={12} h={12}><path d="M2 0v10h10M2 6h4v4" stroke="#2f7fe6" strokeWidth="1.600" /></Ico></IconButton>
          <IconButton $w={19} aria-label="极轴"><Ico w={12} h={12}><circle cx="6" cy="6" r="5" stroke="#ccc" strokeWidth="1.200" /><path d="M6 6h6" stroke="#ccc" strokeWidth="1.500" /></Ico></IconButton>
          <IconButton $w={13} aria-label="极轴列表"><Tiny /></IconButton>
        </StatusGroup>
        <StatusGroup>
          <IconButton $w={18} aria-label="对象捕捉追踪"><Ico w={12} h={12}><path d="M11 1L1 11h11M6 6l4 4" stroke="#2f7fe6" strokeWidth="1.500" /></Ico></IconButton>
          <IconButton $w={19} aria-label="对象捕捉"><Ico w={12} h={12}><path d="M2 2h9v9H2z" stroke="#2f7fe6" strokeWidth="1.500" /><path d="M0 0h5v5H0z" fill="#16703a" /></Ico></IconButton>
          <IconButton $w={13} aria-label="对象捕捉列表"><Tiny /></IconButton>
        </StatusGroup>
        <StatusGroup>
          <IconButton $w={19} aria-label="自定义状态栏"><Ico w={11} h={10}><path d="M0 1h11M0 5h11M0 9h11" stroke="#ddd" strokeWidth="1.400" /></Ico></IconButton>
        </StatusGroup>
      </Status>
    </Window>
  );
}
